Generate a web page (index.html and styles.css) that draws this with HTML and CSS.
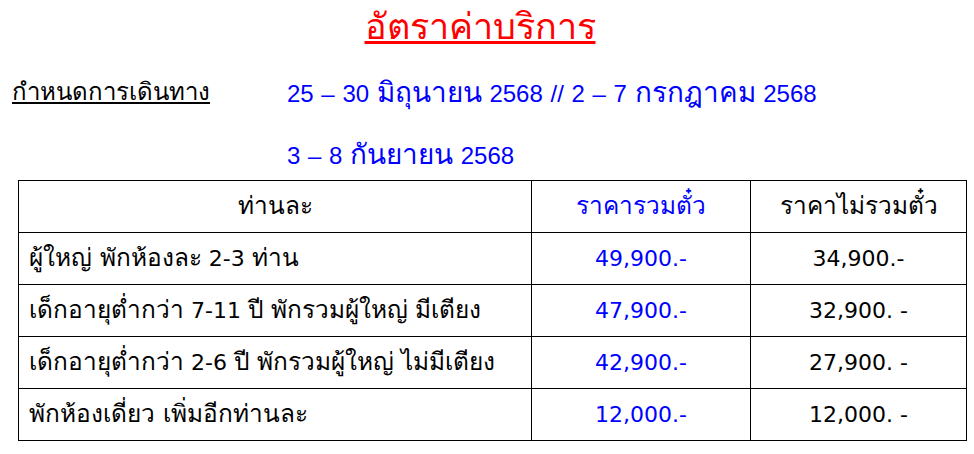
FILE: index.html
```html
<!DOCTYPE html>
<html lang="th">
<head>
<meta charset="utf-8">
<title>อัตราค่าบริการ</title>
<link rel="stylesheet" href="styles.css">
</head>
<body>
<div class="page">
  <h1 class="title"><span>อัตราค่าบริการ</span></h1>
  <div class="schedule">
    <div class="label">กำหนดการเดินทาง</div>
    <div class="dates">
      <div class="date-line">25 – 30 <span class="th-date">มิถุนายน</span> 2568 // 2 – 7 <span class="th-date">กรกฎาคม</span> 2568</div>
      <div class="date-line">3 – 8 <span class="th-date">กันยายน</span> 2568</div>
    </div>
  </div>
  <table class="rates">
    <colgroup>
      <col class="c1"><col class="c2"><col class="c3">
    </colgroup>
    <thead>
      <tr>
        <th><span class="th">ท่านละ</span></th>
        <th class="blue"><span class="th">ราคารวมตั๋ว</span></th>
        <th><span class="th">ราคาไม่รวมตั๋ว</span></th>
      </tr>
    </thead>
    <tbody>
      <tr><td class="desc"><span class="th">ผู้ใหญ่ พักห้องละ</span> 2-3 <span class="th">ท่าน</span></td><td class="blue">49,900.-</td><td>34,900.-</td></tr>
      <tr><td class="desc"><span class="th">เด็กอายุต่ำกว่า</span> 7-11 <span class="th">ปี พักรวมผู้ใหญ่ มีเตียง</span></td><td class="blue">47,900.-</td><td>32,900. -</td></tr>
      <tr><td class="desc"><span class="th">เด็กอายุต่ำกว่า</span> 2-6 <span class="th">ปี พักรวมผู้ใหญ่ ไม่มีเตียง</span></td><td class="blue">42,900.-</td><td>27,900. -</td></tr>
      <tr><td class="desc"><span class="th">พักห้องเดี่ยว เพิ่มอีกท่านละ</span></td><td class="blue">12,000.-</td><td>12,000. -</td></tr>
    </tbody>
  </table>
</div>
</body>
</html>
```
FILE: styles.css
```css
html, body {
  margin: 0;
  padding: 0;
  background: #ffffff;
}
body {
  font-family: "DejaVu Sans", "Noto Sans", sans-serif;
  color: #000000;
  width: 974px;
  height: 454px;
  overflow: hidden;
}
.page {
  display: flex;
  flex-direction: column;
}
.th {
  font-size: 1.11em;
}
.title {
  margin: 0;
  height: 62px;
  display: flex;
  justify-content: center;
  align-items: flex-start;
  padding-top: 5px;
  box-sizing: border-box;
  font-size: 36px;
  font-weight: normal;
  color: #ff0000;
  line-height: 44px;
}
.title span {
  text-decoration: underline;
  text-decoration-thickness: 3px;
  margin-left: -14px;
}
.schedule {
  display: grid;
  grid-template-columns: 275px auto;
  padding-left: 12px;
  height: 118px;
}
.label {
  font-size: 24px;
  text-decoration: underline;
  line-height: 61px;
}
.dates {
  color: #0000ff;
  font-family: "Liberation Sans", "DejaVu Sans", sans-serif;
  font-size: 24px;
  word-spacing: 1px;
}
.th-date {
  font-family: "DejaVu Sans", sans-serif;
  font-size: 1.16em;
}
.date-line {
  line-height: 61px;
}
.rates {
  margin-left: 18px;
  width: 949px;
  border-collapse: collapse;
  table-layout: fixed;
  font-size: 22px;
}
.rates .c1 { width: 513px; }
.rates .c2 { width: 219px; }
.rates .c3 { width: 216px; }
.rates th, .rates td {
  border: 1px solid #000000;
  height: 51px;
  padding: 0;
  text-align: center;
  font-weight: normal;
  vertical-align: middle;
  line-height: 30px;
}
.rates td.desc {
  text-align: left;
  padding-left: 10px;
}
.blue {
  color: #0000ff;
}
```
